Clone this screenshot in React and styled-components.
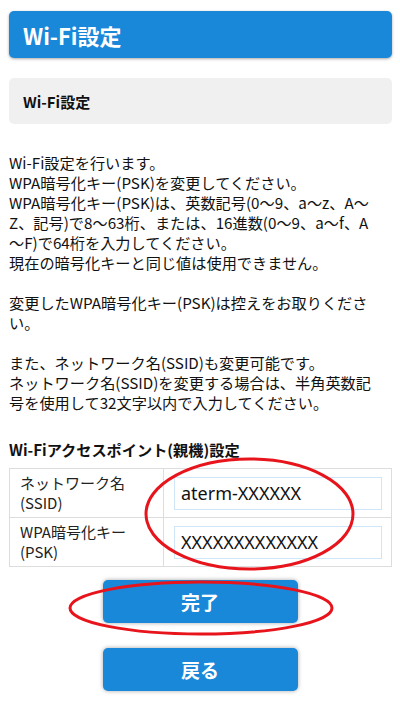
import React, { useState } from "react";
import styled, { createGlobalStyle } from "styled-components";

const GlobalStyle = createGlobalStyle`
  body {
    margin: 0;
    background: #ffffff;
    font-family: "Noto Sans CJK JP", "Noto Sans", sans-serif;
    color: #111111;
  }
`;

const intro = `Wi-Fi設定を行います。
WPA暗号化キー(PSK)を変更してください。
WPA暗号化キー(PSK)は、英数記号(0〜9、a〜z、A〜
Z、記号)で8〜63桁、または、16進数(0〜9、a〜f、A
〜F)で64桁を入力してください。
現在の暗号化キーと同じ値は使用できません。

変更したWPA暗号化キー(PSK)は控えをお取りくださ
い。

また、ネットワーク名(SSID)も変更可能です。
ネットワーク名(SSID)を変更する場合は、半角英数記
号を使用して32文字以内で入力してください。`;

function App() {
  const [ssid, setSsid] = useState("aterm-XXXXXX");
  const [psk, setPsk] = useState("XXXXXXXXXXXXX");

  return (
    <Page>
      <GlobalStyle />
      <TitleBar>Wi-Fi設定</TitleBar>
      <SectionBox>Wi-Fi設定</SectionBox>
      <Intro>{intro}</Intro>

      <TableTitle>Wi-Fiアクセスポイント(親機)設定</TableTitle>
      <SettingTable>
        <tbody>
          <tr>
            <LabelCell>
              ネットワーク名
              <br />
              (SSID)
            </LabelCell>
            <ValueCell>
              <TextInput value={ssid} onChange={(e) => setSsid(e.target.value)} />
            </ValueCell>
          </tr>
          <tr>
            <LabelCell>
              WPA暗号化キー
              <br />
              (PSK)
            </LabelCell>
            <ValueCell>
              <TextInput value={psk} onChange={(e) => setPsk(e.target.value)} />
            </ValueCell>
          </tr>
        </tbody>
      </SettingTable>

      <Buttons>
        <Button>完了</Button>
        <Button>戻る</Button>
      </Buttons>

      {/* red hand-drawn marks over the form */}
      <Mark $left={144} $top={457} $w={211} $h={114}>
        <svg width="100%" height="100%" viewBox="0 0 211 114">
          <ellipse cx="105.5" cy="57" rx="103.5" ry="55" fill="none" stroke="#e8141b" strokeWidth="3" />
        </svg>
      </Mark>
      <Mark $left={68} $top={580} $w={266} $h={56}>
        <svg width="100%" height="100%" viewBox="0 0 266 56">
          <ellipse cx="133" cy="28" rx="131" ry="26" fill="none" stroke="#e8141b" strokeWidth="3" />
        </svg>
      </Mark>
    </Page>
  );
}

const Page = styled.div`
  position: relative;
  padding: 11px 8px 20px 9px;
`;

const TitleBar = styled.div`
  height: 47px;
  display: flex;
  align-items: center;
  padding-left: 14px;
  background: #1a88d9;
  border-radius: 5px;
  box-shadow: 0 1px 3px rgba(0, 0, 0, 0.35);
  color: #ffffff;
  font-size: 22px;
  font-weight: 700;
`;

const SectionBox = styled.div`
  margin-top: 20px;
  height: 46px;
  display: flex;
  align-items: center;
  padding-left: 14px;
  background: #f0f0f0;
  border-radius: 5px;
  font-size: 15px;
  font-weight: 700;
  color: #111111;
`;

const Intro = styled.p`
  margin: 28px 0 0;
  font-size: 15.2px;
  line-height: 20px;
  white-space: pre;
  color: #111111;
`;

const TableTitle = styled.h3`
  margin: 27px 0 9px;
  font-size: 15.2px;
  line-height: 20px;
  font-weight: 700;
  color: #111111;
`;

const SettingTable = styled.table`
  width: 100%;
  border-collapse: collapse;
  border: 1px solid #dddddd;
`;

const LabelCell = styled.td`
  width: 133px;
  padding: 4px 10px;
  border: 1px solid #dddddd;
  font-size: 15px;
  line-height: 20px;
  vertical-align: middle;
  color: #222222;
`;

const ValueCell = styled.td`
  padding: 7px 9px 7px 10px;
  border: 1px solid #dddddd;
`;

const TextInput = styled.input`
  box-sizing: border-box;
  display: block;
  width: 100%;
  height: 33px;
  padding: 0 6px;
  border: 1px solid #cfe5f8;
  border-radius: 0;
  outline: none;
  font-family: "Noto Sans", "Noto Sans CJK JP", sans-serif;
  font-size: 18px;
  color: #111111;
  background: #ffffff;
`;

const Buttons = styled.div`
  margin-top: 13px;
  display: flex;
  flex-direction: column;
  align-items: center;
  gap: 25px;
  padding-right: 1px;
`;

const Button = styled.button`
  width: 195px;
  height: 43px;
  border: none;
  border-radius: 5px;
  background: #1a88d9;
  box-shadow: 0 0 4px rgba(0, 0, 0, 0.35);
  color: #ffffff;
  font-family: "Noto Sans CJK JP", sans-serif;
  font-size: 19px;
  font-weight: 700;
  cursor: pointer;
`;

const Mark = styled.div`
  position: absolute;
  left: ${(p) => p.$left}px;
  top: ${(p) => p.$top}px;
  width: ${(p) => p.$w}px;
  height: ${(p) => p.$h}px;
  pointer-events: none;

  svg {
    display: block;
  }
`;

export default App;
